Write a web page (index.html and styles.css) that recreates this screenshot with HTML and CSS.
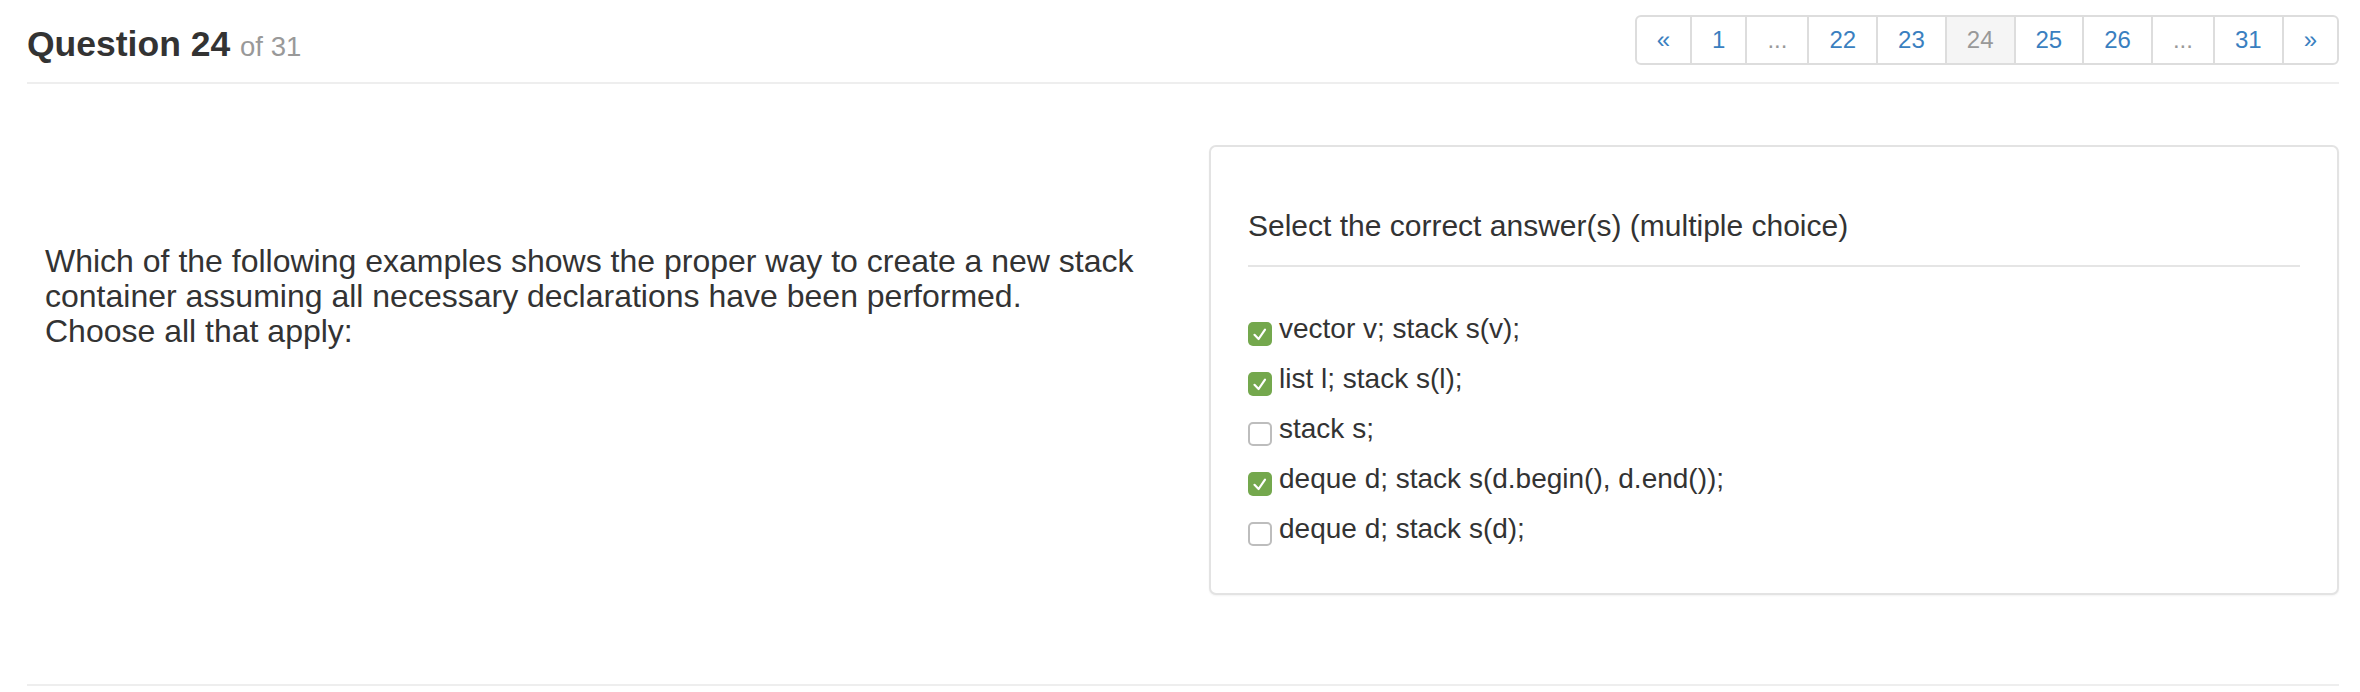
FILE: index.html
```html
<!DOCTYPE html>
<html lang="en">
<head>
<meta charset="utf-8">
<title>Question 24 of 31</title>
<link rel="stylesheet" href="styles.css">
</head>
<body>
<div class="page">
  <header class="page-header">
    <h1 class="title">Question 24 <small class="title-sub">of 31</small></h1>
    <ul class="pagination">
      <li><a class="pg-link" href="#">&laquo;</a></li>
      <li><a class="pg-link" href="#">1</a></li>
      <li><span class="pg-link pg-gap">...</span></li>
      <li><a class="pg-link" href="#">22</a></li>
      <li><a class="pg-link" href="#">23</a></li>
      <li><span class="pg-link pg-active">24</span></li>
      <li><a class="pg-link" href="#">25</a></li>
      <li><a class="pg-link" href="#">26</a></li>
      <li><span class="pg-link pg-gap">...</span></li>
      <li><a class="pg-link" href="#">31</a></li>
      <li><a class="pg-link" href="#">&raquo;</a></li>
    </ul>
  </header>

  <main class="question-row">
    <section class="question-col">
      <p class="question-text">Which of the following examples shows the proper way to create a new stack container assuming all necessary declarations have been performed.<br>Choose all that apply:</p>
    </section>
    <section class="answer-col">
      <div class="panel">
        <h2 class="panel-heading">Select the correct answer(s) (multiple choice)</h2>
        <hr class="panel-rule">
        <ul class="options">
          <li class="option">
            <span class="box box-checked"><svg viewBox="0 0 24 24" width="24" height="24"><path d="M6.5 12.8 L10.6 17 L17 7.6" fill="none" stroke="#fff" stroke-width="2.2" stroke-linecap="round" stroke-linejoin="round"/></svg></span>
            <span class="option-label">vector v; stack s(v);</span>
          </li>
          <li class="option">
            <span class="box box-checked"><svg viewBox="0 0 24 24" width="24" height="24"><path d="M6.5 12.8 L10.6 17 L17 7.6" fill="none" stroke="#fff" stroke-width="2.2" stroke-linecap="round" stroke-linejoin="round"/></svg></span>
            <span class="option-label">list l; stack s(l);</span>
          </li>
          <li class="option">
            <span class="box"></span>
            <span class="option-label">stack s;</span>
          </li>
          <li class="option">
            <span class="box box-checked"><svg viewBox="0 0 24 24" width="24" height="24"><path d="M6.5 12.8 L10.6 17 L17 7.6" fill="none" stroke="#fff" stroke-width="2.2" stroke-linecap="round" stroke-linejoin="round"/></svg></span>
            <span class="option-label">deque d; stack s(d.begin(), d.end());</span>
          </li>
          <li class="option">
            <span class="box"></span>
            <span class="option-label">deque d; stack s(d);</span>
          </li>
        </ul>
      </div>
    </section>
  </main>
</div>
</body>
</html>
```

FILE: styles.css
```css
* { box-sizing: border-box; }

html, body {
  margin: 0;
  padding: 0;
  background: #fff;
}

body {
  font-family: "Liberation Sans", Arial, Helvetica, sans-serif;
  color: #333;
}

.page {
  padding: 0 21px 0 27px;
}

.page-header {
  display: flex;
  justify-content: space-between;
  align-items: flex-start;
  height: 84px;
  border-bottom: 2px solid #eee;
}

.title {
  margin: 24px 0 0 0;
  font-size: 35.5px;
  line-height: 40px;
  font-weight: bold;
  color: #333;
}

.title-sub {
  font-size: 27.5px;
  font-weight: normal;
  color: #999;
}

.pagination {
  display: flex;
  list-style: none;
  margin: 15px 0 0 0;
  padding: 0;
}

.pagination li + li {
  margin-left: -2px;
}

.pg-link {
  display: block;
  padding: 0 20px;
  font-size: 24px;
  line-height: 46px;
  border: 2px solid #ddd;
  color: #3a7fc0;
  text-decoration: none;
  background: #fff;
}

.pagination li:first-child .pg-link {
  border-radius: 6px 0 0 6px;
}

.pagination li:last-child .pg-link {
  border-radius: 0 6px 6px 0;
}

.pg-gap {
  color: #999;
}

.pg-active {
  color: #999;
  background: #f5f5f5;
}

.question-row {
  display: flex;
  height: 602px;
  padding-top: 61px;
  border-bottom: 2px solid #eee;
}

.question-col {
  width: 1156px;
  flex: none;
  padding-left: 18px;
  padding-right: 23px;
}

.question-text {
  margin: 99px 0 0 0;
  font-size: 32px;
  line-height: 35px;
  color: #333;
}

.answer-col {
  flex: 1;
  padding-left: 26px;
}

.panel {
  border: 2px solid #e3e3e3;
  border-radius: 7px;
  box-shadow: 0 1px 2px rgba(0, 0, 0, 0.05);
  padding: 61px 37px 39px 37px;
  background: #fff;
}

.panel-heading {
  margin: 0;
  font-size: 30px;
  line-height: 36px;
  font-weight: normal;
  color: #333;
}

.panel-rule {
  border: 0;
  border-top: 2px solid #e5e5e5;
  margin: 21px 0 0 0;
  height: 0;
}

.options {
  list-style: none;
  margin: 37px 0 0 0;
  padding: 0;
}

.option {
  display: flex;
  align-items: flex-start;
  height: 50px;
}

.box {
  flex: none;
  width: 24px;
  height: 24px;
  margin-top: 18px;
  margin-right: 7px;
  border: 2px solid #bdbdbd;
  border-radius: 5px;
  background: #fff;
  overflow: hidden;
}

.box-checked {
  border: 0;
  background: #74a84d;
}

.box svg {
  display: block;
}

.option-label {
  font-size: 28px;
  line-height: 50px;
  color: #333;
}
```
